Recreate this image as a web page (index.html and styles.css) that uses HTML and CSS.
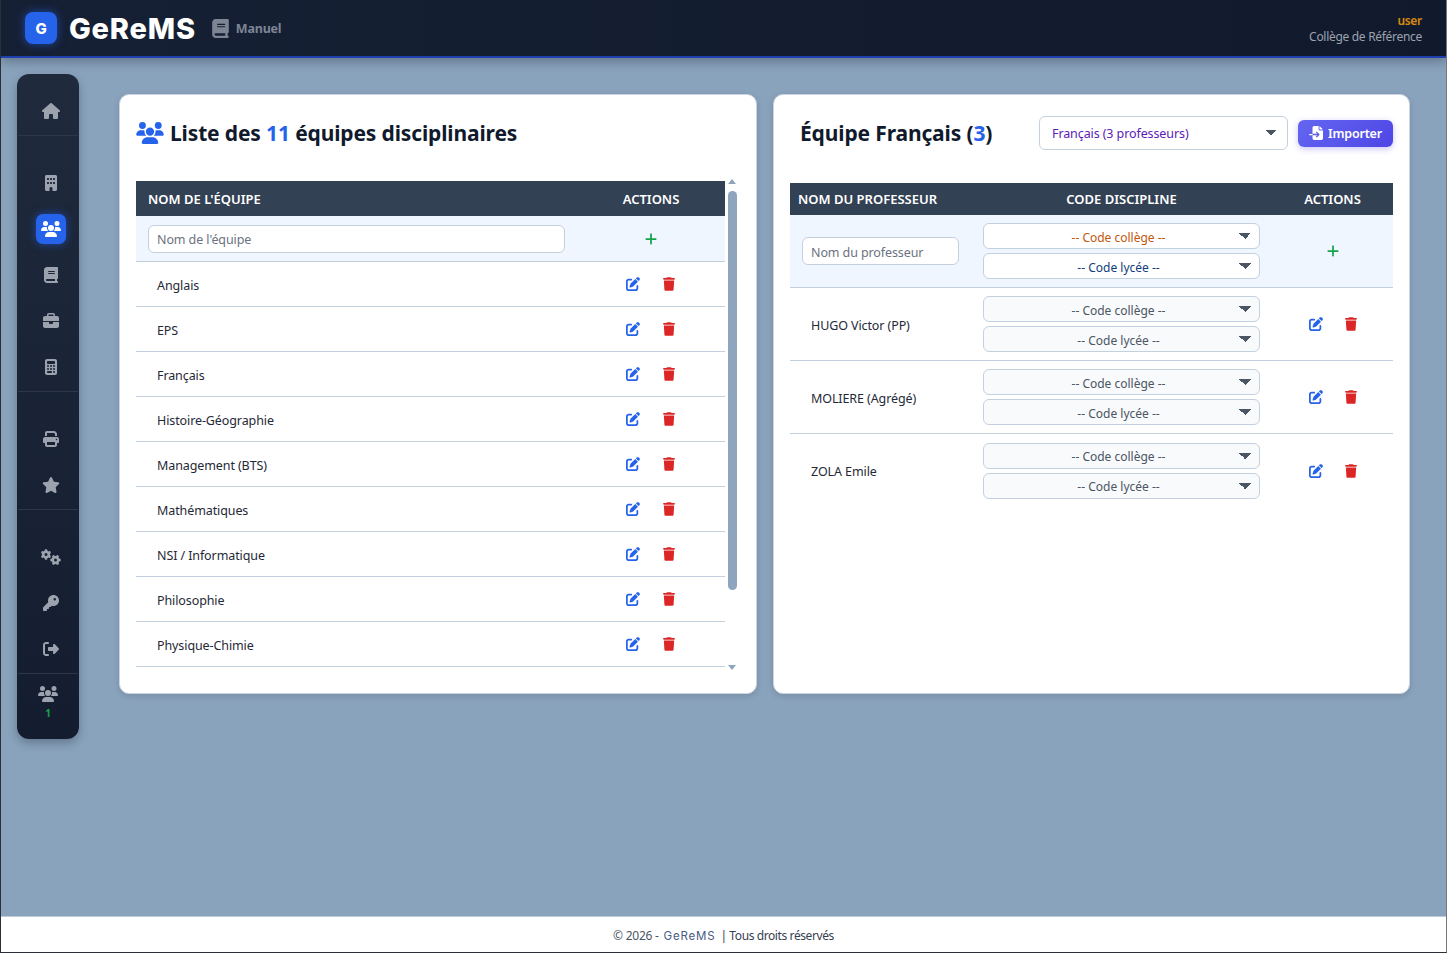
FILE: index.html
```html
<!DOCTYPE html>
<html lang="fr">
<head>
    <meta charset="UTF-8">
    <meta name="viewport" content="width=device-width, initial-scale=1.0">
    <title>GeReMS - Équipes disciplinaires</title>
    <link rel="stylesheet" href="styles.css">
</head>
<body>
    <svg class="sprite" aria-hidden="true">
        <symbol id="i-home" viewBox="0 0 576 512"><path d="M575.8 255.5c0 18-15 32.1-32 32.1h-32l.7 160.2c0 2.7-.2 5.4-.5 8.1V472c0 22.1-17.9 40-40 40H456c-1.1 0-2.2 0-3.3-.1c-1.4 .1-2.8 .1-4.2 .1H416 392c-22.1 0-40-17.9-40-40V448 384c0-17.7-14.3-32-32-32H256c-17.7 0-32 14.3-32 32v64 24c0 22.1-17.9 40-40 40H160 128.1c-1.5 0-3-.1-4.5-.2c-1.2 .1-2.4 .2-3.6 .2H104c-22.1 0-40-17.9-40-40V360c0-.9 0-1.9 .1-2.8V287.6H32c-18 0-32-14-32-32.1c0-9 3-17 10-24L266.4 8c7-7 15-8 22-8s15 2 21 7L564.8 231.5c8 7 12 15 11 24z"/></symbol>
        <symbol id="i-users" viewBox="0 0 640 512"><path d="M144 0a80 80 0 1 1 0 160A80 80 0 1 1 144 0zM512 0a80 80 0 1 1 0 160A80 80 0 1 1 512 0zM0 298.7C0 239.8 47.8 192 106.7 192h42.7c15.9 0 31 3.5 44.6 9.7c-1.3 7.2-1.9 14.7-1.9 22.3c0 38.2 16.8 72.5 43.3 96c-.2 0-.4 0-.7 0H21.3C9.6 320 0 310.4 0 298.7zM405.3 320c-.2 0-.4 0-.7 0c26.6-23.5 43.3-57.8 43.3-96c0-7.6-.7-15-1.9-22.3c13.6-6.3 28.7-9.7 44.6-9.7h42.7C592.2 192 640 239.8 640 298.7c0 11.8-9.6 21.3-21.3 21.3H405.3zM224 224a96 96 0 1 1 192 0 96 96 0 1 1 -192 0zM128 485.3C128 411.7 187.7 352 261.3 352H378.7C452.3 352 512 411.7 512 485.3c0 14.7-11.9 26.7-26.7 26.7H154.7c-14.7 0-26.7-11.9-26.7-26.7z"/></symbol>
        <symbol id="i-book" viewBox="0 0 448 512"><path d="M96 0C43 0 0 43 0 96V416c0 53 43 96 96 96H384h32c17.7 0 32-14.3 32-32s-14.3-32-32-32V384c17.7 0 32-14.3 32-32V32c0-17.7-14.3-32-32-32H384 96zm0 384H352v64H96c-17.7 0-32-14.3-32-32s14.3-32 32-32zm32-240c0-8.8 7.2-16 16-16H336c8.8 0 16 7.2 16 16s-7.2 16-16 16H144c-8.8 0-16-7.2-16-16zm16 48H336c8.8 0 16 7.2 16 16s-7.2 16-16 16H144c-8.8 0-16-7.2-16-16s7.2-16 16-16z"/></symbol>
        <symbol id="i-building" viewBox="0 0 384 512"><path d="M48 0C21.5 0 0 21.5 0 48V464c0 26.5 21.5 48 48 48h96V432c0-26.5 21.5-48 48-48s48 21.5 48 48v80h96c26.5 0 48-21.5 48-48V48c0-26.5-21.5-48-48-48H48zM64 240c0-8.8 7.2-16 16-16h32c8.8 0 16 7.2 16 16v32c0 8.8-7.2 16-16 16H80c-8.8 0-16-7.2-16-16V240zm112-16h32c8.8 0 16 7.2 16 16v32c0 8.8-7.2 16-16 16H176c-8.8 0-16-7.2-16-16V240c0-8.8 7.2-16 16-16zm80 16c0-8.8 7.2-16 16-16h32c8.8 0 16 7.2 16 16v32c0 8.8-7.2 16-16 16H272c-8.8 0-16-7.2-16-16V240zM80 96h32c8.8 0 16 7.2 16 16v32c0 8.8-7.2 16-16 16H80c-8.8 0-16-7.2-16-16V112c0-8.8 7.2-16 16-16zm80 16c0-8.8 7.2-16 16-16h32c8.8 0 16 7.2 16 16v32c0 8.8-7.2 16-16 16H176c-8.8 0-16-7.2-16-16V112zM272 96h32c8.8 0 16 7.2 16 16v32c0 8.8-7.2 16-16 16H272c-8.8 0-16-7.2-16-16V112c0-8.8 7.2-16 16-16z"/></symbol>
        <symbol id="i-briefcase" viewBox="0 0 512 512"><path d="M184 48H328c4.4 0 8 3.6 8 8V96H176V56c0-4.4 3.6-8 8-8zm-56 8V96H64C28.7 96 0 124.7 0 160v96H192 320 512V160c0-35.3-28.7-64-64-64H384V56c0-30.9-25.1-56-56-56H184c-30.9 0-56 25.1-56 56zM512 288H320v32c0 17.7-14.3 32-32 32H224c-17.7 0-32-14.3-32-32V288H0V416c0 35.3 28.7 64 64 64H448c35.3 0 64-28.7 64-64V288z"/></symbol>
        <symbol id="i-calc" viewBox="0 0 384 512"><path d="M64 0C28.7 0 0 28.7 0 64V448c0 35.3 28.7 64 64 64H320c35.3 0 64-28.7 64-64V64c0-35.3-28.7-64-64-64H64zM96 64H288c17.7 0 32 14.3 32 32v32c0 17.7-14.3 32-32 32H96c-17.7 0-32-14.3-32-32V96c0-17.7 14.3-32 32-32zm32 160a32 32 0 1 1 -64 0 32 32 0 1 1 64 0zM96 352a32 32 0 1 1 0-64 32 32 0 1 1 0 64zM64 416c0-17.7 14.3-32 32-32h96c17.7 0 32 14.3 32 32s-14.3 32-32 32H96c-17.7 0-32-14.3-32-32zM192 256a32 32 0 1 1 0-64 32 32 0 1 1 0 64zm32 64a32 32 0 1 1 -64 0 32 32 0 1 1 64 0zm64-64a32 32 0 1 1 0-64 32 32 0 1 1 0 64zm32 64a32 32 0 1 1 -64 0 32 32 0 1 1 64 0zM288 448a32 32 0 1 1 0-64 32 32 0 1 1 0 64z"/></symbol>
        <symbol id="i-print" viewBox="0 0 512 512"><path d="M128 0C92.7 0 64 28.7 64 64v96h64V64H354.7L384 93.3V160h64V93.3c0-17-6.7-33.3-18.7-45.3L400 18.7C388 6.7 371.7 0 354.7 0H128zM384 352v32 64H128V384 368 352H384zm64 32h32c17.7 0 32-14.3 32-32V256c0-35.3-28.7-64-64-64H64c-35.3 0-64 28.7-64 64v96c0 17.7 14.3 32 32 32H64v64c0 35.3 28.7 64 64 64H384c35.3 0 64-28.7 64-64V384zM432 248a24 24 0 1 1 0 48 24 24 0 1 1 0-48z"/></symbol>
        <symbol id="i-star" viewBox="0 0 576 512"><path d="M316.9 18C311.6 7 300.4 0 288.1 0s-23.4 7-28.8 18L195 150.3 51.4 171.5c-12 1.8-22 10.2-25.7 21.7s-.7 24.2 7.9 32.7L137.8 329 113.2 474.7c-2 12 3 24.2 12.9 31.3s23 8 33.8 2.3l128.3-68.5 128.3 68.5c10.8 5.7 23.9 4.9 33.8-2.3s14.9-19.3 12.9-31.3L438.5 329 542.7 225.9c8.6-8.5 11.7-21.2 7.9-32.7s-13.7-19.9-25.7-21.7L381.2 150.3 316.9 18z"/></symbol>
        <symbol id="i-gears" viewBox="0 0 640 512"><path d="M308.5 135.3c7.1-6.3 9.9-16.2 6.2-25c-2.3-5.3-4.8-10.5-7.6-15.5L304 89.4c-3-5-6.3-9.9-9.8-14.6c-5.7-7.6-15.7-10.1-24.7-7.1l-28.2 9.3c-10.7-8.8-23-16-36.2-20.9L199 27.1c-1.9-9.3-9.1-16.7-18.5-17.8C173.9 8.4 167.2 8 160.4 8h-.7c-6.8 0-13.5 .4-20.1 1.2c-9.4 1.1-16.6 8.6-18.5 17.8L115 56.1c-13.3 5-25.5 12.1-36.2 20.9L50.5 67.8c-9-3-19-.5-24.7 7.1c-3.5 4.7-6.8 9.6-9.9 14.6l-3 5.3c-2.8 5-5.3 10.2-7.6 15.6c-3.7 8.7-.9 18.6 6.2 25l22.2 19.8C32.6 161.9 32 168.9 32 176s.6 14.1 1.7 20.9L11.5 216.7c-7.1 6.3-9.9 16.2-6.2 25c2.3 5.3 4.8 10.5 7.6 15.6l3 5.2c3 5.1 6.3 9.9 9.9 14.6c5.7 7.6 15.7 10.1 24.7 7.1l28.2-9.3c10.7 8.8 23 16 36.2 20.9l6.1 29.1c1.9 9.3 9.1 16.7 18.5 17.8c6.7 .8 13.5 1.2 20.4 1.2s13.7-.4 20.4-1.2c9.4-1.1 16.6-8.6 18.5-17.8l6.1-29.1c13.3-5 25.5-12.1 36.2-20.9l28.2 9.3c9 3 19 .5 24.7-7.1c3.5-4.7 6.8-9.5 9.8-14.6l3.1-5.4c2.8-5 5.3-10.2 7.6-15.5c3.7-8.7 .9-18.6-6.2-25l-22.2-19.8c1.1-6.8 1.7-13.8 1.7-20.9s-.6-14.1-1.7-20.9l22.2-19.8zM112 176a48 48 0 1 1 96 0 48 48 0 1 1 -96 0zM504.7 500.5c6.3 7.1 16.2 9.9 25 6.2c5.3-2.3 10.5-4.8 15.5-7.6l5.4-3.1c5-3 9.9-6.3 14.6-9.8c7.6-5.7 10.1-15.7 7.1-24.7l-9.3-28.2c8.8-10.7 16-23 20.9-36.2l29.1-6.1c9.3-1.9 16.7-9.1 17.8-18.5c.8-6.7 1.2-13.5 1.2-20.4s-.4-13.7-1.2-20.4c-1.1-9.4-8.6-16.6-17.8-18.5L583.9 307c-5-13.3-12.1-25.5-20.9-36.2l9.3-28.2c3-9 .5-19-7.1-24.7c-4.7-3.5-9.6-6.8-14.6-9.9l-5.3-3c-5-2.8-10.2-5.3-15.6-7.6c-8.7-3.7-18.6-.9-25 6.2l-19.8 22.2c-6.8-1.1-13.8-1.7-20.9-1.7s-14.1 .6-20.9 1.7l-19.8-22.2c-6.3-7.1-16.2-9.9-25-6.2c-5.3 2.3-10.5 4.8-15.6 7.6l-5.2 3c-5.1 3-9.9 6.3-14.6 9.9c-7.6 5.7-10.1 15.7-7.1 24.7l9.3 28.2c-8.8 10.7-16 23-20.9 36.2L315.1 313c-9.3 1.9-16.7 9.1-17.8 18.5c-.8 6.7-1.2 13.5-1.2 20.4s.4 13.7 1.2 20.4c1.1 9.4 8.6 16.6 17.8 18.5l29.1 6.1c5 13.3 12.1 25.5 20.9 36.2l-9.3 28.2c-3 9-.5 19 7.1 24.7c4.7 3.5 9.5 6.8 14.6 9.8l5.4 3.1c5 2.8 10.2 5.3 15.5 7.6c8.7 3.7 18.6 .9 25-6.2l19.8-22.2c6.8 1.1 13.8 1.7 20.9 1.7s14.1-.6 20.9-1.7l19.8 22.2zM464 304a48 48 0 1 1 0 96 48 48 0 1 1 0-96z"/></symbol>
        <symbol id="i-key" viewBox="0 0 512 512"><path d="M336 352c97.2 0 176-78.8 176-176S433.2 0 336 0S160 78.8 160 176c0 18.7 2.9 36.8 8.3 53.7L7 391c-4.5 4.5-7 10.6-7 17v80c0 13.3 10.7 24 24 24h80c13.3 0 24-10.7 24-24V448h40c13.3 0 24-10.7 24-24V384h40c6.4 0 12.5-2.5 17-7l33.3-33.3c16.9 5.4 35 8.3 53.7 8.3zM376 96a40 40 0 1 1 0 80 40 40 0 1 1 0-80z"/></symbol>
        <symbol id="i-logout" viewBox="0 0 512 512"><path d="M377.9 105.9L500.7 228.7c7.2 7.2 11.3 17.1 11.3 27.3s-4.1 20.1-11.3 27.3L377.9 406.1c-6.4 6.4-15 9.9-24 9.9c-18.7 0-33.9-15.2-33.9-33.9l0-62.1-128 0c-17.7 0-32-14.3-32-32l0-64c0-17.7 14.3-32 32-32l128 0 0-62.1c0-18.7 15.2-33.9 33.9-33.9c9 0 17.6 3.6 24 9.9zM160 96L96 96c-17.7 0-32 14.3-32 32l0 256c0 17.7 14.3 32 32 32l64 0c17.7 0 32 14.3 32 32s-14.3 32-32 32l-64 0c-53 0-96-43-96-96L0 128C0 75 43 32 96 32l64 0c17.7 0 32 14.3 32 32s-14.3 32-32 32z"/></symbol>
        <symbol id="i-edit" viewBox="0 0 512 512"><path d="M471.6 21.7c-21.9-21.9-57.3-21.9-79.2 0L362.3 51.7l97.9 97.9 30.1-30.1c21.9-21.9 21.9-57.3 0-79.2L471.6 21.7zm-299.2 220c-6.1 6.1-10.8 13.6-13.5 21.9l-29.6 88.8c-2.9 8.6-.6 18.1 5.8 24.6s15.9 8.7 24.6 5.8l88.8-29.6c8.2-2.7 15.7-7.4 21.9-13.5L437.7 172.3 339.7 74.3 172.4 241.7zM96 64C43 64 0 107 0 160V416c0 53 43 96 96 96H352c53 0 96-43 96-96V320c0-17.7-14.3-32-32-32s-32 14.3-32 32v96c0 17.7-14.3 32-32 32H96c-17.7 0-32-14.3-32-32V160c0-17.7 14.3-32 32-32h96c17.7 0 32-14.3 32-32s-14.3-32-32-32H96z"/></symbol>
        <symbol id="i-trash" viewBox="0 0 448 512"><path d="M135.2 17.7L128 32H32C14.3 32 0 46.3 0 64S14.3 96 32 96H416c17.7 0 32-14.3 32-32s-14.3-32-32-32H320l-7.2-14.3C307.4 6.8 296.3 0 284.2 0H163.8c-12.1 0-23.2 6.8-28.6 17.7zM416 128H32L53.2 467c1.6 25.3 22.6 45 47.9 45H346.9c25.3 0 46.3-19.7 47.9-45L416 128z"/></symbol>
        <symbol id="i-plus" viewBox="0 0 448 512"><path d="M256 80c0-17.7-14.3-32-32-32s-32 14.3-32 32V224H48c-17.7 0-32 14.3-32 32s14.3 32 32 32H192V432c0 17.7 14.3 32 32 32s32-14.3 32-32V288H400c17.7 0 32-14.3 32-32s-14.3-32-32-32H256V80z"/></symbol>
        <symbol id="i-import" viewBox="0 0 512 512"><path d="M128 64c0-35.3 28.7-64 64-64H352V128c0 17.7 14.3 32 32 32H512V448c0 35.3-28.7 64-64 64H192c-35.3 0-64-28.7-64-64V336H302.1l-39 39c-9.4 9.4-9.4 24.6 0 33.9s24.6 9.4 33.9 0l80-80c9.4-9.4 9.4-24.6 0-33.9l-80-80c-9.4-9.4-24.6-9.4-33.9 0s-9.4 24.6 0 33.9l39 39H128V64zm0 224v48H24c-13.3 0-24-10.7-24-24s10.7-24 24-24H128zM512 128H384V0L512 128z"/></symbol>
    </svg>

    <header class="topbar">
        <div class="brand">
            <span class="brand-badge">G</span>
            <span class="brand-name">GeReMS</span>
        </div>
        <a class="manual-link" href="#">
            <svg class="icon-manual"><use href="#i-book"/></svg>
            <span>Manuel</span>
        </a>
        <div class="user-box">
            <div class="user-name">user</div>
            <div class="user-school">Collège de Référence</div>
        </div>
    </header>

    <main class="page">
        <nav class="sidebar">
            <div class="side-group side-first">
                <a class="side-item" href="#"><svg class="side-icon"><use href="#i-home"/></svg></a>
            </div>
            <div class="side-group">
                <a class="side-item" href="#"><svg class="side-icon"><use href="#i-building"/></svg></a>
                <a class="side-item active" href="#"><svg class="side-icon"><use href="#i-users"/></svg></a>
                <a class="side-item" href="#"><svg class="side-icon"><use href="#i-book"/></svg></a>
                <a class="side-item" href="#"><svg class="side-icon"><use href="#i-briefcase"/></svg></a>
                <a class="side-item" href="#"><svg class="side-icon"><use href="#i-calc"/></svg></a>
            </div>
            <div class="side-group">
                <a class="side-item" href="#"><svg class="side-icon"><use href="#i-print"/></svg></a>
                <a class="side-item" href="#"><svg class="side-icon"><use href="#i-star"/></svg></a>
            </div>
            <div class="side-group">
                <a class="side-item" href="#"><svg class="side-icon"><use href="#i-gears"/></svg></a>
                <a class="side-item" href="#"><svg class="side-icon"><use href="#i-key"/></svg></a>
                <a class="side-item" href="#"><svg class="side-icon"><use href="#i-logout"/></svg></a>
            </div>
            <div class="side-online">
                <svg class="online-icon"><use href="#i-users"/></svg>
                <span class="online-count">1</span>
            </div>
        </nav>

        <section class="card card-list">
            <div class="card-head">
                <svg class="title-icon"><use href="#i-users"/></svg>
                <h2 class="card-title">Liste des <span class="accent">11</span> équipes disciplinaires</h2>
            </div>
            <div class="list-wrap">
                <div class="list-scroll">
                    <table class="data-table team-table">
                        <thead>
                            <tr>
                                <th class="th-left">Nom de l'équipe</th>
                                <th>Actions</th>
                            </tr>
                        </thead>
                        <tbody>
                            <tr class="row-add">
                                <td><input class="text-input" type="text" placeholder="Nom de l'équipe"></td>
                                <td class="cell-center"><svg class="icon-plus"><use href="#i-plus"/></svg></td>
                            </tr>
                            <tr><td class="cell-name">Anglais</td><td><div class="row-actions"><svg class="icon-edit"><use href="#i-edit"/></svg><svg class="icon-trash"><use href="#i-trash"/></svg></div></td></tr>
                            <tr><td class="cell-name">EPS</td><td><div class="row-actions"><svg class="icon-edit"><use href="#i-edit"/></svg><svg class="icon-trash"><use href="#i-trash"/></svg></div></td></tr>
                            <tr><td class="cell-name">Français</td><td><div class="row-actions"><svg class="icon-edit"><use href="#i-edit"/></svg><svg class="icon-trash"><use href="#i-trash"/></svg></div></td></tr>
                            <tr><td class="cell-name">Histoire-Géographie</td><td><div class="row-actions"><svg class="icon-edit"><use href="#i-edit"/></svg><svg class="icon-trash"><use href="#i-trash"/></svg></div></td></tr>
                            <tr><td class="cell-name">Management (BTS)</td><td><div class="row-actions"><svg class="icon-edit"><use href="#i-edit"/></svg><svg class="icon-trash"><use href="#i-trash"/></svg></div></td></tr>
                            <tr><td class="cell-name">Mathématiques</td><td><div class="row-actions"><svg class="icon-edit"><use href="#i-edit"/></svg><svg class="icon-trash"><use href="#i-trash"/></svg></div></td></tr>
                            <tr><td class="cell-name">NSI / Informatique</td><td><div class="row-actions"><svg class="icon-edit"><use href="#i-edit"/></svg><svg class="icon-trash"><use href="#i-trash"/></svg></div></td></tr>
                            <tr><td class="cell-name">Philosophie</td><td><div class="row-actions"><svg class="icon-edit"><use href="#i-edit"/></svg><svg class="icon-trash"><use href="#i-trash"/></svg></div></td></tr>
                            <tr><td class="cell-name">Physique-Chimie</td><td><div class="row-actions"><svg class="icon-edit"><use href="#i-edit"/></svg><svg class="icon-trash"><use href="#i-trash"/></svg></div></td></tr>
                        </tbody>
                    </table>
                </div>
                <div class="scroll-rail">
                    <span class="scroll-up"></span>
                    <span class="scroll-thumb"></span>
                    <span class="scroll-down"></span>
                </div>
            </div>
        </section>

        <section class="card card-team">
            <div class="card-head team-head">
                <h2 class="card-title">Équipe Français (<span class="accent">3</span>)</h2>
                <select class="team-select">
                    <option>Français (3 professeurs)</option>
                </select>
                <button class="btn-import" type="button">
                    <svg class="icon-import"><use href="#i-import"/></svg>
                    Importer
                </button>
            </div>
            <table class="data-table prof-table">
                <thead>
                    <tr>
                        <th class="th-left">Nom du professeur</th>
                        <th>Code discipline</th>
                        <th>Actions</th>
                    </tr>
                </thead>
                <tbody>
                    <tr class="row-add">
                        <td class="cell-input"><input class="text-input" type="text" placeholder="Nom du professeur"></td>
                        <td class="cell-codes">
                            <select class="code-select code-college"><option>-- Code collège --</option></select>
                            <select class="code-select code-lycee"><option>-- Code lycée --</option></select>
                        </td>
                        <td class="cell-center"><svg class="icon-plus"><use href="#i-plus"/></svg></td>
                    </tr>
                    <tr>
                        <td class="cell-name">HUGO Victor (PP)</td>
                        <td class="cell-codes">
                            <select class="code-select"><option>-- Code collège --</option></select>
                            <select class="code-select"><option>-- Code lycée --</option></select>
                        </td>
                        <td><div class="row-actions"><svg class="icon-edit"><use href="#i-edit"/></svg><svg class="icon-trash"><use href="#i-trash"/></svg></div></td>
                    </tr>
                    <tr>
                        <td class="cell-name">MOLIERE (Agrégé)</td>
                        <td class="cell-codes">
                            <select class="code-select"><option>-- Code collège --</option></select>
                            <select class="code-select"><option>-- Code lycée --</option></select>
                        </td>
                        <td><div class="row-actions"><svg class="icon-edit"><use href="#i-edit"/></svg><svg class="icon-trash"><use href="#i-trash"/></svg></div></td>
                    </tr>
                    <tr class="row-last">
                        <td class="cell-name">ZOLA Emile</td>
                        <td class="cell-codes">
                            <select class="code-select"><option>-- Code collège --</option></select>
                            <select class="code-select"><option>-- Code lycée --</option></select>
                        </td>
                        <td><div class="row-actions"><svg class="icon-edit"><use href="#i-edit"/></svg><svg class="icon-trash"><use href="#i-trash"/></svg></div></td>
                    </tr>
                </tbody>
            </table>
        </section>
    </main>

    <footer class="footer">
        <span class="footer-copy">© 2026 - </span>
        <span class="footer-brand">GeReMS</span>
        <span class="footer-rights">| Tous droits réservés</span>
    </footer>
</body>
</html>
```

FILE: styles.css
```css
* {
    box-sizing: border-box;
    margin: 0;
    padding: 0;
}

html, body {
    height: 100%;
}

body {
    display: flex;
    flex-direction: column;
    background: #8aa3bc;
    border-left: 1px solid #2b3038;
    border-right: 1px solid #74787c;
    border-bottom: 1px solid #2b3038;
    font-family: "Noto Sans", sans-serif;
    font-size: 12.5px;
    letter-spacing: -0.1px;
    color: #1f2937;
    overflow: hidden;
}

a {
    text-decoration: none;
    color: inherit;
}

svg {
    fill: currentColor;
    display: block;
    flex: none;
}

.sprite {
    width: 0;
    height: 0;
    position: absolute;
}

/* top bar */
.topbar {
    flex: none;
    height: 58px;
    display: flex;
    align-items: center;
    padding: 0 24px;
    background: linear-gradient(90deg, #162034, #111a2d);
    border-bottom: 2px solid #1e40af;
    box-shadow: 0 4px 10px rgba(15, 23, 42, 0.3);
    position: relative;
}

.brand {
    display: flex;
    align-items: center;
    gap: 12px;
}

.brand-badge {
    width: 32px;
    height: 32px;
    border-radius: 8px;
    background: #2563eb;
    box-shadow: 0 0 10px rgba(37, 99, 235, 0.6);
    color: #fff;
    font-family: Inter, sans-serif;
    font-weight: 800;
    font-size: 15px;
    display: flex;
    align-items: center;
    justify-content: center;
}

.brand-name {
    font-family: Inter, sans-serif;
    font-weight: 800;
    font-size: 29px;
    letter-spacing: 0.8px;
    color: #fff;
}

.manual-link {
    display: flex;
    align-items: center;
    gap: 7px;
    margin-left: 16px;
    color: #7d8594;
    font-weight: 700;
    font-size: 12.5px;
    letter-spacing: -0.2px;
}

.icon-manual {
    width: 17px;
    height: 19px;
}

.user-box {
    margin-left: auto;
    padding-top: 2px;
    text-align: right;
    font-size: 12px;
    line-height: 16px;
    letter-spacing: -0.3px;
}

.user-name {
    color: #d98a0b;
    font-weight: 600;
}

.user-school {
    color: #9ca3af;
}

/* page */
.page {
    flex: 1;
    display: flex;
    align-items: flex-start;
    padding: 16px 36px 0 16px;
    min-height: 0;
}

/* side bar */
.sidebar {
    flex: none;
    width: 62px;
    height: 665px;
    margin-right: 40px;
    border-radius: 12px;
    background: linear-gradient(180deg, #1f2a3c, #141d30);
    box-shadow: 0 4px 10px rgba(15, 23, 42, 0.3);
    padding: 0 1px;
}

.side-group {
    padding: 24px 0 1px;
    border-bottom: 1px solid #2d3748;
}

.side-first {
    padding-top: 14px;
}

.side-item {
    height: 46px;
    padding-left: 6px;
    display: flex;
    align-items: center;
    justify-content: center;
    color: #9ca3af;
}

.side-icon {
    width: 20px;
    height: 16px;
}

.side-item.active {
    color: #fff;
}

.side-item.active .side-icon {
    width: 30px;
    height: 30px;
    padding: 7px 5px;
    border-radius: 7px;
    background: #2563eb;
    box-shadow: 0 0 8px rgba(37, 99, 235, 0.6);
}

.side-online {
    display: flex;
    flex-direction: column;
    align-items: center;
    padding-top: 12px;
    color: #9ca3af;
}

.online-icon {
    width: 20px;
    height: 16px;
}

.online-count {
    margin-top: 4px;
    font-size: 10px;
    font-weight: 700;
    color: #16a34a;
}

/* cards */
.card {
    height: 600px;
    margin-top: 20px;
    padding: 16px;
    background: #fff;
    border: 1px solid #cbd5e1;
    border-radius: 10px;
    box-shadow: 0 2px 6px rgba(15, 23, 42, 0.15);
}

.card-list {
    flex: none;
    width: 638px;
    margin-right: 16px;
    padding-right: 19px;
}

.card-team {
    flex: 1;
    padding-bottom: 0;
}

.card-head {
    height: 44px;
    display: flex;
    align-items: center;
    gap: 6px;
}

.card-title {
    font-size: 21px;
    font-weight: 700;
    letter-spacing: -0.14px;
    color: #111a2d;
}

.title-icon {
    width: 28px;
    height: 22px;
    color: #2563eb;
}

.accent {
    color: #2563eb;
}

/* list with its scroll bar */
.list-wrap {
    display: flex;
    gap: 3px;
    height: 494px;
    margin-top: 23px;
}

.list-scroll {
    flex: 1;
    min-width: 0;
    padding-top: 3px;
}

.scroll-rail {
    flex: none;
    width: 9px;
    display: flex;
    flex-direction: column;
    padding: 1px 0 2px;
}

.scroll-up,
.scroll-down {
    width: 0;
    height: 0;
    border-left: 4.5px solid transparent;
    border-right: 4.5px solid transparent;
}

.scroll-up {
    border-bottom: 5px solid #8fa4bd;
}

.scroll-down {
    margin-top: auto;
    border-top: 5px solid #8fa4bd;
}

.scroll-thumb {
    height: 399px;
    margin-top: 7px;
    background: #8fa4bd;
    border-radius: 5px;
}

/* tables */
.data-table {
    width: 100%;
    table-layout: fixed;
    border-collapse: separate;
    border-spacing: 0;
}

.data-table th {
    background: #334155;
    color: #fff;
    font-size: 13px;
    font-weight: 600;
    letter-spacing: 0;
    text-transform: uppercase;
    height: 35px;
    padding: 0 12px;
    text-align: center;
}

.data-table th.th-left {
    text-align: left;
}

.data-table td {
    height: 45px;
    border-bottom: 1px solid #c3d0de;
    vertical-align: middle;
}

.team-table th:last-child,
.team-table td:last-child {
    width: 148px;
}

.team-table td:first-child {
    padding: 0 12px;
}

.team-table .row-add td {
    height: 46px;
}

.team-table .row-actions {
    padding-right: 2px;
}

.row-add td {
    background: #eff6ff;
}

.data-table td.cell-name {
    padding: 2px 0 0 21px;
    color: #1f2937;
}

.cell-center svg {
    margin: 0 auto;
}

.text-input {
    display: block;
    width: 100%;
    height: 28px;
    padding: 2px 8px 0;
    border: 1px solid #c3d0de;
    border-radius: 6px;
    background: #fff;
    font-family: inherit;
    font-size: 12.5px;
    letter-spacing: -0.1px;
}

.text-input::placeholder {
    color: #6b7280;
}

.icon-plus {
    width: 14px;
    height: 14px;
    color: #16a34a;
}

.row-actions {
    display: flex;
    justify-content: center;
    align-items: center;
    gap: 22px;
}

.team-table .row-actions {
    gap: 23px;
}

.icon-edit {
    width: 14px;
    height: 14px;
    color: #2563eb;
}

.icon-trash {
    width: 12px;
    height: 14px;
    color: #dc2626;
}

/* team card */
.team-head {
    gap: 0;
    padding-left: 10px;
}

.team-select {
    appearance: none;
    width: 249px;
    height: 34px;
    margin-left: auto;
    padding: 0 12px;
    border: 1px solid #c3d0de;
    border-radius: 6px;
    font-family: inherit;
    font-size: 12.5px;
    letter-spacing: -0.1px;
    color: #5b21b6;
    background: #fff conic-gradient(from -45deg at 50% 100%, #4b5563 90deg, transparent 0) no-repeat right 10px center / 12px 6px;
}

.btn-import {
    width: 95px;
    height: 27px;
    margin-left: 10px;
    display: flex;
    align-items: center;
    justify-content: center;
    gap: 5px;
    border: none;
    border-radius: 6px;
    background: linear-gradient(135deg, #6366f1, #4f46e5);
    box-shadow: 0 2px 6px rgba(79, 70, 229, 0.3);
    color: #fff;
    font-family: inherit;
    font-size: 12.5px;
    font-weight: 600;
    letter-spacing: -0.2px;
}

.icon-import {
    width: 14px;
    height: 14px;
}

.prof-table {
    margin-top: 28px;
}

.prof-table th {
    height: 32px;
    padding: 0;
}

.prof-table th.th-left {
    padding-left: 8px;
}

.prof-table th:first-child {
    width: 181px;
}

.prof-table th:last-child {
    width: 121px;
}

.prof-table td {
    height: 73px;
}

.prof-table .row-last td {
    border-bottom: none;
}

.cell-input,
.cell-codes {
    padding: 0 12px;
}

.code-select {
    appearance: none;
    display: block;
    width: 100%;
    height: 26px;
    padding: 2px 18px 0 12px;
    border: 1px solid #c3d0de;
    border-radius: 6px;
    font-family: inherit;
    font-size: 12px;
    text-align: center;
    text-align-last: center;
    color: #4b5563;
    background: #f8fafc conic-gradient(from -45deg at 50% 100%, #4b5563 90deg, transparent 0) no-repeat right 8px center / 12px 6px;
}

.code-select + .code-select {
    margin-top: 4px;
}

.row-add .code-select {
    background-color: #fff;
}

.code-college {
    color: #c2570c;
}

.code-lycee {
    color: #0f3d7a;
}

/* footer */
.footer {
    flex: none;
    height: 36px;
    display: flex;
    align-items: center;
    justify-content: center;
    gap: 5px;
    padding-top: 2px;
    background: #fff;
    border-top: 1px solid #bccbdc;
    font-size: 12px;
    letter-spacing: -0.25px;
    color: #4b5563;
}

.footer-brand {
    font-family: Inter, sans-serif;
    font-size: 11.5px;
    letter-spacing: 0.8px;
    color: #475a85;
}

.footer-rights {
    color: #374151;
    letter-spacing: -0.4px;
}
```
